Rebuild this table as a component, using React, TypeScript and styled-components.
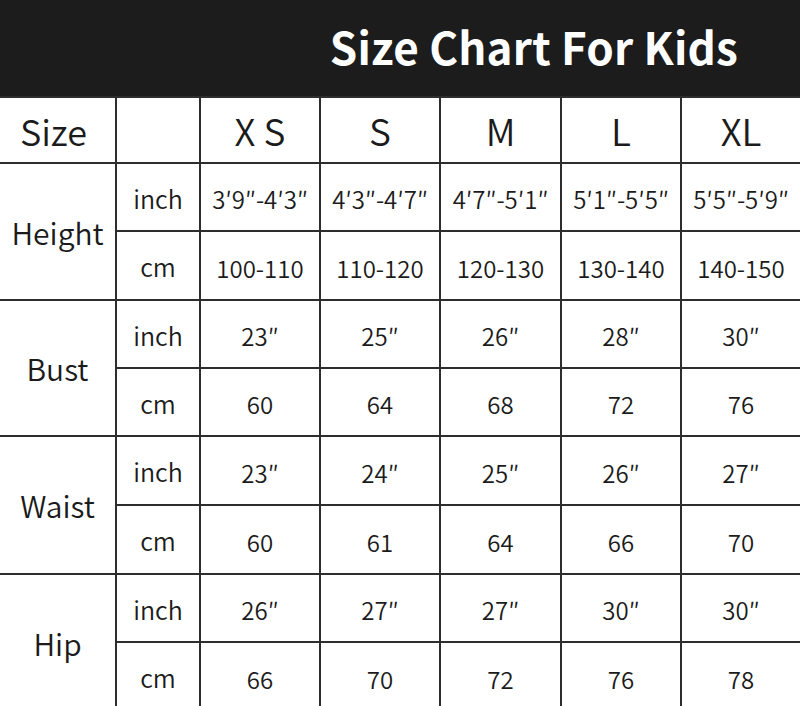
import React from "react";
import styled, { createGlobalStyle } from "styled-components";

const GlobalStyle = createGlobalStyle`
  html, body {
    margin: 0;
    padding: 0;
    background: #ffffff;
    overflow: hidden;
  }
  body {
    font-family: "Noto Sans CJK SC", "Noto Sans", sans-serif;
    font-weight: 350;
    color: #1b1b1b;
  }
`;

const Page = styled.div`
  width: 800px;
  display: flex;
  flex-direction: column;
`;

const Banner = styled.header`
  height: 96px;
  box-sizing: border-box;
  background: #1c1c1c;
  display: flex;
  align-items: center;
  justify-content: flex-end;
  padding: 0 62px 5px 0;
`;

const Title = styled.h1`
  margin: 0;
  color: #ffffff;
  font-family: "Noto Sans CJK SC", "Noto Sans", sans-serif;
  font-weight: 700;
  font-size: 44px;
  line-height: 1;
  letter-spacing: 0.2px;
`;

const Grid = styled.div`
  display: grid;
  grid-template-columns: 115px 82px 118px 118px 119px 118px 118px;
  grid-template-rows: 64px 66px 67px 66px 66px 67px 67px 66px 67px;
  gap: 2px;
  padding-top: 2px;
  background: #2d2d2d;
`;

type Kind = "corner" | "head" | "label" | "unit" | "value";

const sizes: Record<Kind, string> = {
  corner: "36px",
  head: "37px",
  label: "30px",
  unit: "25px",
  value: "24px",
};

const offsets: Record<Kind, string> = {
  corner: "0px",
  head: "0px",
  label: "0px",
  unit: "2px",
  value: "4px",
};

const Cell = styled.div<{ $kind: Kind; $span?: boolean }>`
  position: relative;
  background: #ffffff;
  display: flex;
  align-items: center;
  justify-content: center;
  font-size: ${(p) => sizes[p.$kind]};
  padding-top: ${(p) => offsets[p.$kind]};
  padding-right: ${(p) => (p.$kind === "corner" ? "8px" : "0px")};
  box-sizing: border-box;
  line-height: 1;
  white-space: nowrap;
  grid-row: ${(p) => (p.$span ? "span 2" : "auto")};
`;

const sizeNames = ["X S", "S", "M", "L", "XL"];

const measures: { label: string; inch: string[]; cm: string[] }[] = [
  {
    label: "Height",
    inch: ["3′9″-4′3″", "4′3″-4′7″", "4′7″-5′1″", "5′1″-5′5″", "5′5″-5′9″"],
    cm: ["100-110", "110-120", "120-130", "130-140", "140-150"],
  },
  {
    label: "Bust",
    inch: ["23″", "25″", "26″", "28″", "30″"],
    cm: ["60", "64", "68", "72", "76"],
  },
  {
    label: "Waist",
    inch: ["23″", "24″", "25″", "26″", "27″"],
    cm: ["60", "61", "64", "66", "70"],
  },
  {
    label: "Hip",
    inch: ["26″", "27″", "27″", "30″", "30″"],
    cm: ["66", "70", "72", "76", "78"],
  },
];

export default function App() {
  return (
    <Page>
      <GlobalStyle />
      <Banner>
        <Title>Size Chart For Kids</Title>
      </Banner>
      <Grid>
        <Cell $kind="corner">Size</Cell>
        <Cell $kind="corner" />
        {sizeNames.map((s) => (
          <Cell key={s} $kind="head">
            {s}
          </Cell>
        ))}
        {measures.map((m) => (
          <React.Fragment key={m.label}>
            <Cell $kind="label" $span>
              {m.label}
            </Cell>
            <Cell $kind="unit">inch</Cell>
            {m.inch.map((v, i) => (
              <Cell key={"i" + i} $kind="value">
                {v}
              </Cell>
            ))}
            <Cell $kind="unit">cm</Cell>
            {m.cm.map((v, i) => (
              <Cell key={"c" + i} $kind="value">
                {v}
              </Cell>
            ))}
          </React.Fragment>
        ))}
      </Grid>
    </Page>
  );
}
